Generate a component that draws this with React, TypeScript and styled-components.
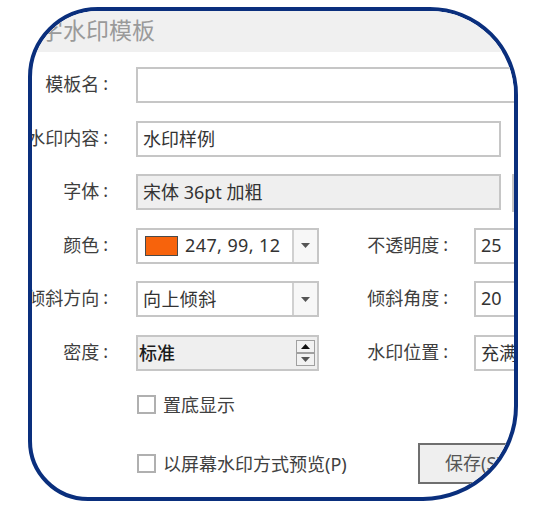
import React from 'react'
import styled, { createGlobalStyle } from 'styled-components'

const GlobalStyle = createGlobalStyle`
  html, body {
    margin: 0;
    padding: 0;
    background: #fff;
  }
  body {
    width: 550px;
    height: 514px;
    overflow: hidden;
    font-family: "Noto Sans", "Noto Sans CJK SC", sans-serif;
  }
`

const Page = styled.div`
  padding: 7px 0 0 28px;
  height: 514px;
  box-sizing: border-box;
`

const Frame = styled.div`
  width: 490px;
  height: 494px;
  box-sizing: border-box;
  border: 4px solid #0a2f7d;
  border-radius: 70px 88px 95px 60px;
  overflow: hidden;
  background: #fff;
`

const TitleBar = styled.div`
  height: 41px;
  box-sizing: border-box;
  background: #f0f0f0;
  display: flex;
  align-items: center;
  padding: 0 0 5px 8px;
  font-size: 23px;
  color: #9a9a9a;
  white-space: nowrap;
`

const Body = styled.div`
  padding-top: 15px;
`

const FormGrid = styled.div`
  display: grid;
  grid-template-columns: 104px 183px 155px 1fr;
  grid-auto-rows: 36px;
  row-gap: 17.5px;
`

const Label = styled.div<{ $pad?: number }>`
  display: flex;
  justify-content: flex-end;
  align-items: center;
  padding-right: ${(p) => p.$pad ?? 28}px;
  padding-bottom: 4px;
  font-size: 18px;
  color: #3e3e3e;
  white-space: nowrap;
`

const Colon = styled.span`
  margin-left: 4px;
`

const Field = styled.div<{ $w: number; $gray?: boolean }>`
  width: ${(p) => p.$w}px;
  flex: none;
  height: 36px;
  box-sizing: border-box;
  border: 2px solid #c6c6c6;
  background: ${(p) => (p.$gray ? '#efefef' : '#fff')};
  display: flex;
  align-items: center;
  padding: 0 5px 2px;
  font-size: 18px;
  color: #333;
  white-space: nowrap;
`

const Wide = styled.div`
  grid-column: 2 / -1;
  display: flex;
  gap: 11px;
`

const SideButton = styled.div`
  width: 60px;
  flex: none;
  height: 38px;
  box-sizing: border-box;
  border: 2px solid #c6c6c6;
  background: #efefef;
`

const Combo = styled.div<{ $gray?: boolean }>`
  width: 183px;
  height: 36px;
  box-sizing: border-box;
  border: 2px solid #c6c6c6;
  background: ${(p) => (p.$gray ? '#efefef' : '#fff')};
  display: flex;
  align-items: center;
  font-size: 18px;
  color: #333;
  white-space: nowrap;
`

const ComboText = styled.span<{ $strong?: boolean; $gap?: number }>`
  margin-left: ${(p) => p.$gap ?? 5}px;
  margin-bottom: 2px;
  color: ${(p) => (p.$strong ? '#1c1c1c' : '#333')};
  font-weight: ${(p) => (p.$strong ? 500 : 400)};
  letter-spacing: ${(p) => (p.$strong ? 0 : 0.4)}px;
`

const Swatch = styled.span<{ $color: string }>`
  width: 33px;
  height: 20px;
  margin-left: 7px;
  box-sizing: border-box;
  border: 1px solid #4a4a4a;
  background: ${(p) => p.$color};
  flex: none;
`

const ArrowBox = styled.div`
  margin-left: auto;
  width: 23px;
  align-self: stretch;
  border-left: 2px solid #d0d0d0;
  background: #f7f7f7;
  display: flex;
  align-items: center;
  justify-content: center;
`

const SpinStack = styled.div`
  margin-left: auto;
  margin-right: 2px;
  display: flex;
  flex-direction: column;
`

const SpinButton = styled.div`
  width: 19px;
  height: 13px;
  box-sizing: border-box;
  border: 1px solid #a0a0a0;
  background: #f2f2f2;
  display: flex;
  align-items: center;
  justify-content: center;
`

const CheckRow = styled.label`
  display: flex;
  align-items: center;
  font-size: 18px;
  color: #404040;
  white-space: nowrap;
`

const CheckCell = styled(CheckRow)`
  grid-column: 2 / -1;
  margin-top: -3px;
`

const CheckText = styled.span`
  margin-bottom: 2px;
`

const Box = styled.span`
  width: 19px;
  height: 19px;
  margin-left: 1px;
  margin-right: 7px;
  box-sizing: border-box;
  border: 2px solid #b0b0b0;
  background: #fff;
  flex: none;
`

const Footer = styled.div`
  margin-top: 19px;
  display: grid;
  grid-template-columns: 104px 282px 1fr;
  height: 41px;
`

const FooterCheck = styled(CheckRow)`
  grid-column: 2;
`

const SaveButton = styled.button`
  width: 110px;
  height: 41px;
  box-sizing: border-box;
  border: 2px solid #6f6f6f;
  background: #efefef;
  font-family: inherit;
  font-size: 18px;
  color: #555;
  text-align: left;
  padding: 0 0 3px 25px;
  white-space: nowrap;
`

const Caret = ({ up }: { up?: boolean }): JSX.Element => (
  <svg width="9" height="5" viewBox="0 0 9 5">
    <path d={up ? 'M0 5 L4.5 0 L9 5 Z' : 'M0 0 L9 0 L4.5 5 Z'} fill={up ? '#111' : '#555'} />
  </svg>
)

const FormLabel = ({ text, pad }: { text: string; pad?: number }): JSX.Element => (
  <Label $pad={pad}>
    {text}
    <Colon>:</Colon>
  </Label>
)

const App = (): JSX.Element => {
  return (
    <Page>
      <GlobalStyle />
      <Frame>
        <TitleBar>字水印模板</TitleBar>
        <Body>
          <FormGrid>
            <FormLabel text="模板名" />
            <Wide>
              <Field $w={400} />
            </Wide>

            <FormLabel text="水印内容" />
            <Wide>
              <Field $w={365}>水印样例</Field>
            </Wide>

            <FormLabel text="字体" />
            <Wide>
              <Field $w={365} $gray>
                宋体 36pt 加粗
              </Field>
              <SideButton />
            </Wide>

            <FormLabel text="颜色" />
            <Combo>
              <Swatch $color="#f7630c" />
              <ComboText $gap={7}>247, 99, 12</ComboText>
              <ArrowBox>
                <Caret />
              </ArrowBox>
            </Combo>
            <FormLabel text="不透明度" pad={26} />
            <Field $w={80}>25</Field>

            <FormLabel text="倾斜方向" />
            <Combo>
              <ComboText>向上倾斜</ComboText>
              <ArrowBox>
                <Caret />
              </ArrowBox>
            </Combo>
            <FormLabel text="倾斜角度" pad={26} />
            <Field $w={80}>20</Field>

            <FormLabel text="密度" />
            <Combo $gray>
              <ComboText $strong $gap={1}>
                标准
              </ComboText>
              <SpinStack>
                <SpinButton>
                  <Caret up />
                </SpinButton>
                <SpinButton>
                  <Caret />
                </SpinButton>
              </SpinStack>
            </Combo>
            <FormLabel text="水印位置" pad={26} />
            <Field $w={80}>充满</Field>

            <CheckCell>
              <Box />
              <CheckText>置底显示</CheckText>
            </CheckCell>
          </FormGrid>

          <Footer>
            <FooterCheck>
              <Box />
              <CheckText>以屏幕水印方式预览(P)</CheckText>
            </FooterCheck>
            <SaveButton type="button">保存(S)</SaveButton>
          </Footer>
        </Body>
      </Frame>
    </Page>
  )
}

export default App
